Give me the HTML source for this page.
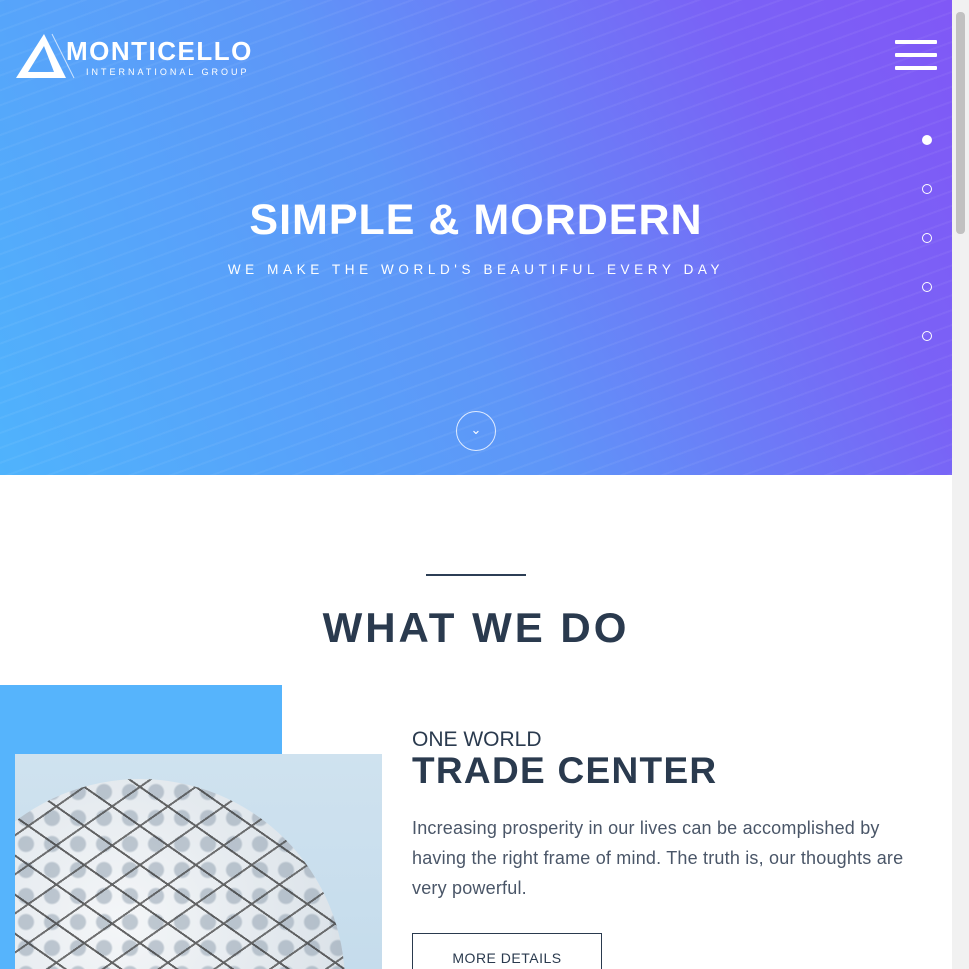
<!DOCTYPE html>
<html><head><style>
*{margin:0;padding:0;box-sizing:border-box}
html,body{width:969px;height:969px;overflow:hidden}
body{background:#fff;font-family:"Liberation Sans",sans-serif;position:relative}
.hero{position:absolute;left:0;top:0;width:952px;height:475px;background:linear-gradient(60deg,#4fb3fc 0%,#5e96f8 45%,#7a62f6 80%,#8058f6 100%);overflow:hidden}
.hero .pat{position:absolute;inset:0;opacity:.05;background:repeating-linear-gradient(160deg,#fff 0 2px,transparent 2px 14px)}
.sb{position:absolute;right:0;top:0;width:17px;height:969px;background:#f1f1f1}
.sb div{position:absolute;left:4px;top:12px;width:9px;height:222px;background:#c1c1c1;border-radius:4px}
.burger{position:absolute;left:895px;top:40px;width:42px}
.burger i{display:block;height:4px;background:#fff;margin-bottom:9px;border-radius:1px}
.dot{position:absolute;left:922px;width:10px;height:10px;border:1.5px solid #fff;border-radius:50%}
h1{position:absolute;top:196px;left:0;width:952px;text-align:center;color:#fff;font-size:43px;font-weight:bold;letter-spacing:1px}
.sub{position:absolute;top:262px;left:0;width:952px;text-align:center;color:#fff;font-size:13.5px;letter-spacing:4.6px}
.down{position:absolute;left:456px;top:411px;width:40px;height:40px;border:1px solid rgba(255,255,255,.8);border-radius:50%;color:#fff;text-align:center;line-height:36px;font-size:13px}
.line{position:absolute;left:426px;top:574px;width:100px;height:1.5px;background:#2c3e55}
h2{position:absolute;top:604px;left:0;width:952px;text-align:center;color:#2a3a4e;font-size:42px;font-weight:bold;letter-spacing:3px}
.blue{position:absolute;left:0;top:685px;width:282px;height:284px;background:#56b4fc}
.img{position:absolute;left:15px;top:754px;width:367px;height:215px;background:linear-gradient(180deg,#cfe2ef,#c5dcec);overflow:hidden}
.ball{position:absolute;left:-80px;top:25px;width:410px;height:410px;border-radius:50%;background:radial-gradient(circle at 45% 35%,#f4f6f8,#dde4ea 60%,#b9c4cd);overflow:hidden}
.ball i{position:absolute;inset:0;background:repeating-linear-gradient(35deg,transparent 0 30px,#333 30px 32px),repeating-linear-gradient(-35deg,transparent 0 30px,#444 30px 32px);opacity:.75}
.ball b{position:absolute;inset:0;background:radial-gradient(circle,#8a9aaa 0 7px,transparent 9px) 0 0/26px 26px;opacity:.5}
.t1{position:absolute;left:412px;top:728px;color:#2a3a4e;font-size:21px}
.t2{position:absolute;left:412px;top:750px;color:#2a3a4e;font-size:37px;font-weight:bold;letter-spacing:1.3px}
.p{position:absolute;left:412px;top:813px;width:500px;color:#4a5668;font-size:18px;line-height:30px;letter-spacing:.2px}
.btn{position:absolute;left:412px;top:933px;width:190px;height:50px;border:1.5px solid #2a3a4e;color:#2a3a4e;font-size:14px;text-align:center;line-height:48px;letter-spacing:.5px}
</style></head><body>
<div class="hero"><div class="pat"></div>
<svg style="position:absolute;left:14px;top:30px" width="250" height="52" viewBox="0 0 250 52">
<path d="M2 48 L30 4 L52 48 Z M14 42 L30 16 L40 42 Z" fill="#fff" fill-rule="evenodd"/>
<path d="M38 4 L60 48" stroke="#fff" stroke-width="1" opacity=".7"/>
<text x="52" y="30" fill="#fff" font-family="Liberation Sans" font-weight="bold" font-size="26" letter-spacing="1.5">MONTICELLO</text>
<text x="72" y="45" fill="#fff" font-family="Liberation Sans" font-size="9" letter-spacing="3">INTERNATIONAL GROUP</text>
</svg>
<div class="burger"><i></i><i></i><i></i></div>
<div class="dot" style="top:135px;background:#fff"></div>
<div class="dot" style="top:184px"></div>
<div class="dot" style="top:233px"></div>
<div class="dot" style="top:282px"></div>
<div class="dot" style="top:331px"></div>
<h1>SIMPLE &amp; MORDERN</h1>
<div class="sub">WE MAKE THE WORLD'S BEAUTIFUL EVERY DAY</div>
<div class="down">⌄</div>
</div>
<div class="line"></div>
<h2>WHAT WE DO</h2>
<div class="blue"></div>
<div class="img"><div class="ball"><b></b><i></i></div></div>
<div class="t1">ONE WORLD</div>
<div class="t2">TRADE CENTER</div>
<div class="p">Increasing prosperity in our lives can be accomplished by having the right frame of mind. The truth is, our thoughts are very powerful.</div>
<div class="btn">MORE DETAILS</div>
<div class="sb"><div></div></div>
</body></html>
